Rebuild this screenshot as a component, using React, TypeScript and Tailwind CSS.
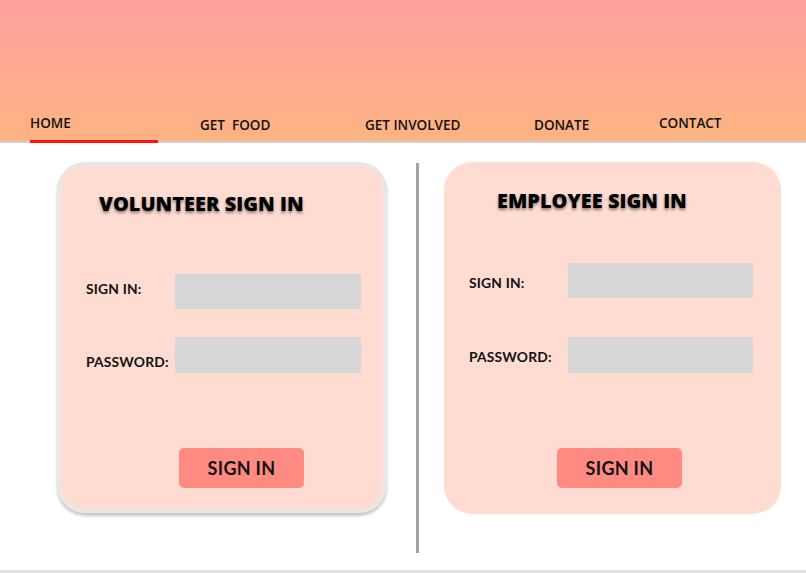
import React from "react";

const nav = "font-['Open_Sans',sans-serif] font-semibold text-[13.5px] text-[#111] leading-none whitespace-pre";
const label = "font-['Lato','Noto_Sans',sans-serif] font-bold text-[13.8px] text-[#111] leading-none tracking-[0.2px]";
const title = "font-['Open_Sans',sans-serif] font-extrabold text-[20px] leading-[28px] text-black [text-shadow:0_2px_3px_rgba(0,0,0,0.45)] whitespace-nowrap";
const btn = "h-[40px] w-[125px] rounded-[5px] bg-[#ff8a82] flex items-center justify-center font-['Lato','Noto_Sans',sans-serif] font-bold text-[18px] text-[#111] tracking-[0.3px]";

export default function App() {
  return (
    <div className="w-[806px] h-[573px] bg-white overflow-hidden flex flex-col">
      <header className="h-[141px] shrink-0 bg-linear-to-b from-[#ffa09d] to-[#fdb381] flex items-end">
        <nav className="flex items-end w-full pl-[30px] pb-[6px]">
          <div className="w-[170px]"><span className={nav + " relative top-[-1px]"}>HOME</span></div>
          <div className="w-[165px]"><span className={nav + " relative top-[1px]"}>GET  FOOD</span></div>
          <div className="w-[169px]"><span className={nav + " relative top-[1px]"}>GET INVOLVED</span></div>
          <div className="w-[125px]"><span className={nav + " relative top-[1px]"}>DONATE</span></div>
          <div><span className={nav + " relative top-[-1px]"}>CONTACT</span></div>
        </nav>
      </header>
      <div className="h-[2px] shrink-0 bg-[#d2d2d2] flex">
        <div className="ml-[30px] w-[128px] h-[3px] -mt-[1px] bg-[#ff1414]" />
      </div>
      <main className="flex items-start pl-[57px] pt-[19px] flex-1">
        <section className="w-[330px] h-[351px] rounded-[28px] border-4 border-[#ebe5e4] bg-[#fedcd2] shadow-[0_3px_3px_rgba(0,0,0,0.22)] flex flex-col">
          <h2 className={title + " mt-[24px] ml-[38px]"}>VOLUNTEER SIGN IN</h2>
          <div className="flex items-start mt-[56px] ml-[25px]">
            <span className={label + " w-[89px] mt-[8px]"}>SIGN IN:</span>
            <div className="w-[186px] h-[35px] bg-[#d7d7d7]" />
          </div>
          <div className="flex items-start mt-[28px] ml-[25px]">
            <span className={label + " w-[89px] mt-[18px]"}>PASSWORD:</span>
            <div className="w-[186px] h-[36px] bg-[#d7d7d7]" />
          </div>
          <div className={btn + " mt-[75px] ml-[118px]"}>SIGN IN</div>
        </section>
        <div className="w-[3px] h-[390px] ml-[29px] mt-[1px] bg-[#a3a3a3]" />
        <section className="w-[337px] h-[352px] ml-[25px] rounded-[28px] bg-[#fedcd2] flex flex-col">
          <h2 className={title + " mt-[25px] ml-[53px]"}>EMPLOYEE SIGN IN</h2>
          <div className="flex items-start mt-[48px] ml-[25px]">
            <span className={label + " w-[99px] mt-[13px]"}>SIGN IN:</span>
            <div className="w-[185px] h-[35px] bg-[#d7d7d7]" />
          </div>
          <div className="flex items-start mt-[39px] ml-[25px]">
            <span className={label + " w-[99px] mt-[13px]"}>PASSWORD:</span>
            <div className="w-[185px] h-[36px] bg-[#d7d7d7]" />
          </div>
          <div className={btn + " mt-[75px] ml-[113px]"}>SIGN IN</div>
        </section>
      </main>
      <div className="h-[3px] shrink-0 bg-[#e2e2e2]" />
    </div>
  );
}
